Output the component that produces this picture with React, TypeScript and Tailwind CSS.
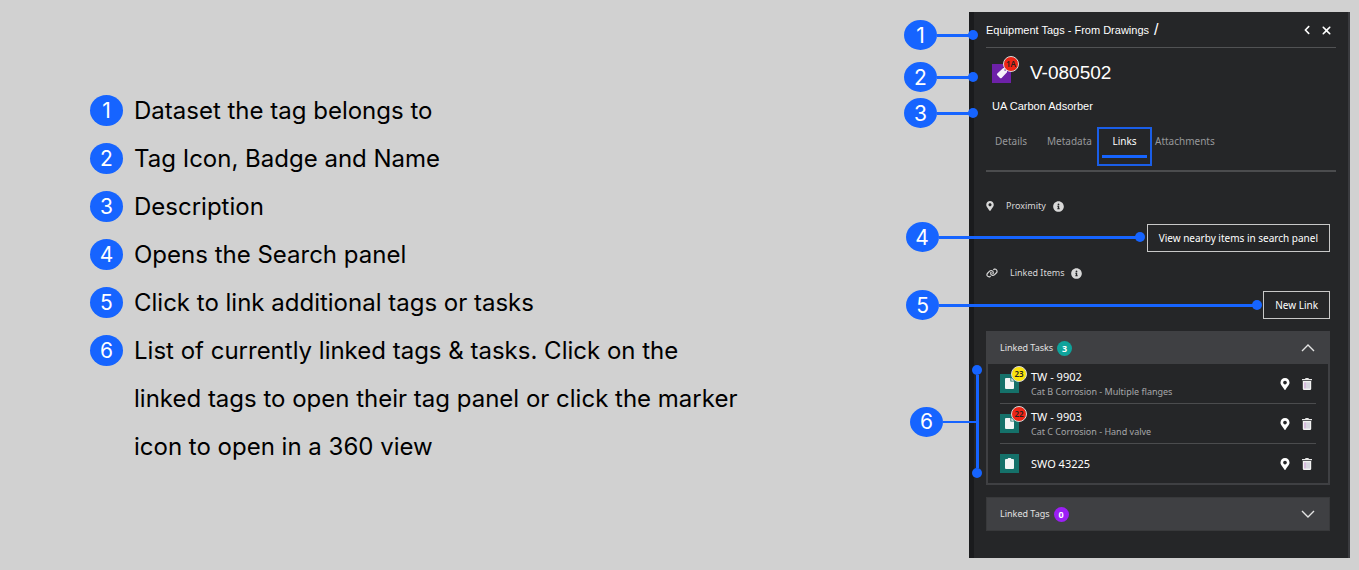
import React, { useState } from "react";
import { FaChevronLeft, FaInfoCircle, FaMapMarkerAlt } from "react-icons/fa";
import { FaLink, FaXmark } from "react-icons/fa6";

const legend = [
  "Dataset the tag belongs to",
  "Tag Icon, Badge and Name",
  "Description",
  "Opens the Search panel",
  "Click to link additional tags or tasks",
  "List of currently linked tags & tasks. Click on the linked tags to open their tag panel or click the marker icon to open in a 360 view",
];

type Task = { name: string; detail?: string; badge?: string; badgeClass?: string };

const tasks: Task[] = [
  { name: "TW - 9902", detail: "Cat B Corrosion - Multiple flanges", badge: "23", badgeClass: "bg-[#fbe40c]" },
  { name: "TW - 9903", detail: "Cat C Corrosion - Hand valve", badge: "22", badgeClass: "bg-[#ee2415]" },
  { name: "SWO 43225" },
];

const tabs = [
  { label: "Details", className: "w-[61px] pl-[9px] text-left text-[#97989a]" },
  { label: "Metadata", className: "w-[50px] text-left text-[#97989a]" },
  { label: "Links", className: "w-[55px] border-2 border-[#1a5ee8] text-center text-white" },
  { label: "Attachments", className: "pl-[3px] text-left text-[#97989a]" },
];

function Marker({ n, className = "" }: { n: number; className?: string }) {
  return (
    <span
      className={`flex w-[33px] shrink-0 items-center justify-center rounded-[50%] bg-[#1664ff] text-[21px] leading-none text-white ${className}`}
    >
      {n}
    </span>
  );
}

function Callout({ n, className }: { n: number; className: string }) {
  return (
    <div className={`pointer-events-none absolute z-10 flex items-center font-[Inter,sans-serif] ${className}`}>
      <Marker n={n} className="h-[30px]" />
      <span className="h-[3px] flex-1 bg-[#1664ff]" />
      <span className="-ml-px size-[10px] rounded-full bg-[#1664ff]" />
    </div>
  );
}

function Badge({ children, className }: { children: React.ReactNode; className: string }) {
  return (
    <span
      className={`absolute flex size-4 items-center justify-center rounded-full border border-[#d9d9d9] font-['Noto_Sans',sans-serif] text-[8px] leading-none font-semibold text-[#222] ${className}`}
    >
      {children}
    </span>
  );
}

function TagIcon() {
  return (
    <svg viewBox="0 0 12 12" className="size-3" aria-hidden="true">
      <path
        fillRule="evenodd"
        d="M7.600 1.100l2.600.1a.9.9 0 0 1 .8.8l.1 2.600a1.200 1.200 0 0 1-.3.900l-5.200 5.400a1.100 1.100 0 0 1-1.600 0L1.300 8.200a1.100 1.100 0 0 1 0-1.600l5.400-5.200a1.200 1.200 0 0 1 .9-.3zM9.100 2.300a.8.8 0 1 0 0 1.600.8.8 0 0 0 0-1.600z"
        fill="#f6f2fa"
      />
    </svg>
  );
}

function FileIcon() {
  return (
    <svg viewBox="0 0 9 11" className="h-[11px] w-[9px]" aria-hidden="true">
      <path d="M1 0h4.400v3.600H9V10a1 1 0 0 1-1 1H1a1 1 0 0 1-1-1V1a1 1 0 0 1 1-1z" fill="#f4f6f6" />
      <path d="M6.300 0L9 2.700H6.300z" fill="#f4f6f6" />
    </svg>
  );
}

function ClipboardIcon() {
  return (
    <svg viewBox="0 0 9 11" className="h-[11px] w-[9px]" aria-hidden="true">
      <path d="M1 1h1.600a2 2 0 0 1 3.800 0H8a1 1 0 0 1 1 1v8a1 1 0 0 1-1 1H1a1 1 0 0 1-1-1V2a1 1 0 0 1 1-1z" fill="#f4f6f6" />
    </svg>
  );
}

function TrashIcon() {
  return (
    <svg viewBox="0 0 10 12" className="h-3 w-[10px]" aria-hidden="true">
      <path d="M0 1h3l.6-1h2.800L7 1h3v1.300H0z" fill="#e6e6e6" />
      <path d="M.8 3h8.400v7.800a1.200 1.200 0 0 1-1.200 1.200H2A1.200 1.200 0 0 1 .8 10.800z" fill="#f1f1f1" />
      <path d="M3 4.300v6.200" stroke="#b06cc0" strokeWidth="0.8" />
      <path d="M5 4.300v6.200M7 4.300v6.200" stroke="#a3a5bd" strokeWidth="0.7" />
    </svg>
  );
}

function Caret({ open }: { open: boolean }) {
  return (
    <svg viewBox="0 0 14 8" className="h-2 w-[14px]" fill="none" stroke="#e4e4e4" strokeWidth="1.400" aria-hidden="true">
      <path d={open ? "M1 7l6-6 6 6" : "M1 1l6 6 6-6"} />
    </svg>
  );
}

function AccordionHeader(props: { title: string; count: number; countClass: string; open: boolean; onToggle: () => void }) {
  return (
    <button
      type="button"
      aria-expanded={props.open}
      onClick={props.onToggle}
      className="flex h-8 w-full items-center bg-[#3f4043] pr-[14px] pl-[13px] text-[9px] text-[#e2e2e2]"
    >
      {props.title}
      <span className={`ml-1 flex size-[15px] items-center justify-center rounded-full text-[9px] leading-none font-bold text-white ${props.countClass}`}>
        {props.count}
      </span>
      <span className="ml-auto">
        <Caret open={props.open} />
      </span>
    </button>
  );
}

function SectionTitle({ icon, children }: { icon: React.ReactNode; children: React.ReactNode }) {
  return (
    <h3 className="flex h-4 items-center text-[9px] text-[#d8d8d8]">
      {icon}
      <span>{children}</span>
      <FaInfoCircle className="ml-[7px] size-[11px]" />
    </h3>
  );
}

const outlineButton =
  "relative flex h-7 items-center border border-[#c8c8c8] px-[11px] text-[10px] whitespace-nowrap text-white";

export default function App() {
  const [tasksOpen, setTasksOpen] = useState(true);
  const [tagsOpen, setTagsOpen] = useState(false);

  return (
    <main className="flex min-h-screen items-start justify-between bg-[#d1d1d1] pt-3 pr-[9px] pb-3">
      <ol className="mt-[75px] ml-[90px] w-[660px] font-[Inter,sans-serif] text-black">
        {legend.map((text, i) => (
          <li key={text} className="flex gap-[11px]">
            <span className="flex h-[47px] items-center">
              <Marker n={i + 1} className="h-[31px]" />
            </span>
            <p className="text-2xl leading-12">{text}</p>
          </li>
        ))}
      </ol>

      <aside className="w-[381px] shrink-0 border-r-2 border-l-5 border-r-[#3a3b3f] border-l-[#1a1b1d] bg-[#252628] pr-3 pb-[27px] pl-3 font-['Noto_Sans',sans-serif] text-white">
        <header className="relative flex h-9 items-center border-b border-[#515254] pt-px font-['Liberation_Sans',sans-serif]">
          <Callout n={1} className="top-2 -left-[82px] w-[74px]" />
          <span className="text-[11px]">Equipment Tags - From Drawings</span>
          <span className="ml-[5px] text-base leading-none">/</span>
          <button type="button" aria-label="Back" className="ml-auto">
            <FaChevronLeft className="size-[10px]" />
          </button>
          <button type="button" aria-label="Close" className="mr-[3px] ml-2">
            <FaXmark className="size-[13px]" />
          </button>
        </header>

        <div className="relative flex h-[50px] items-center pl-[6px] font-['Liberation_Sans',sans-serif]">
          <Callout n={2} className="top-[14px] -left-[82px] w-[74px]" />
          <span className="relative flex size-[19px] items-center justify-center bg-[#6d21a8]">
            <TagIcon />
            <Badge className="-top-2 -right-2 bg-[#ee2415]">1A</Badge>
          </span>
          <h2 className="ml-[19px] text-[19px]">V-080502</h2>
        </div>

        <div className="relative h-4 pl-[6px] font-['Liberation_Sans',sans-serif]">
          <Callout n={3} className="top-0 -left-[82px] w-[74px]" />
          <p className="text-[11px] leading-4">UA Carbon Adsorber</p>
        </div>

        <nav className="flex border-b-2 border-[#4b4c4e] pt-[13px] pb-1">
          {tabs.map((tab) => (
            <button key={tab.label} type="button" className={`relative h-[39px] pb-[10px] text-[10px] ${tab.className}`}>
              {tab.label}
              {tab.label === "Links" && <span className="absolute inset-x-[3px] bottom-[6px] h-[3px] bg-[#1664ff]" />}
            </button>
          ))}
        </nav>

        <div className="pr-[6px]">
          <section className="flex flex-col pt-[26px]">
            <SectionTitle icon={<FaMapMarkerAlt className="mr-3 h-[10px] w-2" />}>Proximity</SectionTitle>
            <button type="button" className={`${outlineButton} mt-[10px] self-end`}>
              <Callout n={4} className="-top-[3px] right-full mr-[3px] w-[239px]" />
              View nearby items in search panel
            </button>
          </section>

          <section className="flex flex-col pt-[13px]">
            <SectionTitle icon={<FaLink className="mr-3 size-3" />}>Linked Items</SectionTitle>
            <button type="button" className={`${outlineButton} mt-[10px] self-end`}>
              <Callout n={5} className="-top-[2px] right-full mr-[2px] w-[356px]" />
              New Link
            </button>
          </section>

          <section className="mt-3 border border-[#3f4043]">
            <AccordionHeader
              title="Linked Tasks"
              count={3}
              countClass="bg-[#0fa39b]"
              open={tasksOpen}
              onToggle={() => setTasksOpen(!tasksOpen)}
            />
            {tasksOpen && (
              <div className="relative border-x border-b border-[#3f4043] px-3">
                <div className="pointer-events-none absolute top-[1px] -left-[78px] z-10 flex h-[113px] items-center font-[Inter,sans-serif]">
                  <Marker n={6} className="h-[30px]" />
                  <span className="h-[2px] w-[33px] bg-[#1664ff]" />
                  <span className="-ml-1 flex h-full w-[10px] flex-col items-center">
                    <span className="size-[10px] shrink-0 rounded-full bg-[#1664ff]" />
                    <span className="w-[3px] flex-1 bg-[#1664ff]" />
                    <span className="size-[10px] shrink-0 rounded-full bg-[#1664ff]" />
                  </span>
                </div>
                <ul>
                  {tasks.map((task) => (
                    <li key={task.name} className="flex h-10 items-center border-b border-[#4b4c4e] last:h-[39px] last:border-b-0">
                      <span className="relative flex size-[19px] items-center justify-center bg-[#15716a]">
                        {task.badge ? <FileIcon /> : <ClipboardIcon />}
                        {task.badge && <Badge className={`-top-2 -right-2 ${task.badgeClass}`}>{task.badge}</Badge>}
                      </span>
                      <div className="ml-3 pt-px">
                        <p className="text-[11px] leading-4">{task.name}</p>
                        {task.detail && <p className="text-[9px] leading-[14px] text-[#a5a6a8]">{task.detail}</p>}
                      </div>
                      <button type="button" aria-label={`Locate ${task.name}`} className="ml-auto">
                        <FaMapMarkerAlt className="h-3 w-[10px]" />
                      </button>
                      <button type="button" aria-label={`Delete ${task.name}`} className="mr-1 ml-3">
                        <TrashIcon />
                      </button>
                    </li>
                  ))}
                </ul>
              </div>
            )}
          </section>

          <section className="mt-3 border border-[#38393b]">
            <AccordionHeader
              title="Linked Tags"
              count={0}
              countClass="bg-[#9c1ff5]"
              open={tagsOpen}
              onToggle={() => setTagsOpen(!tagsOpen)}
            />
          </section>
        </div>
      </aside>
    </main>
  );
}
